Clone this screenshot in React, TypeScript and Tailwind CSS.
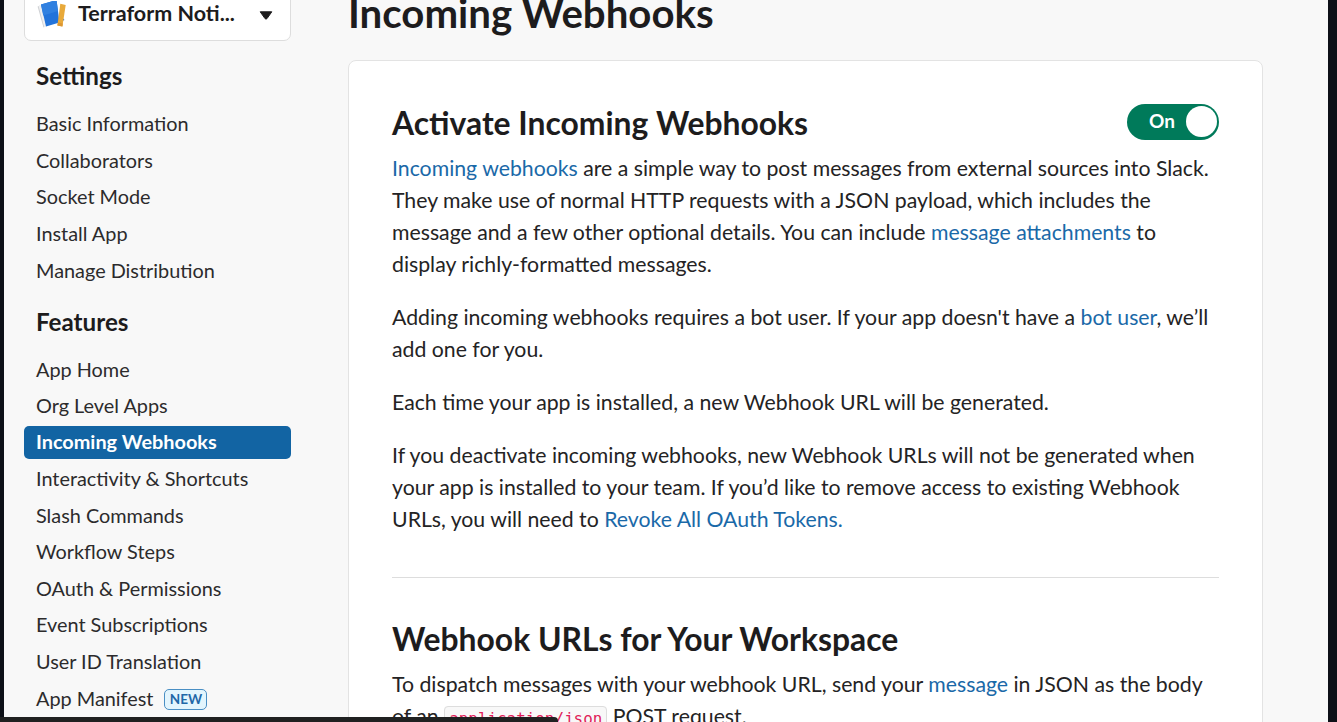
import type { ReactNode } from 'react';

const settings = ['Basic Information', 'Collaborators', 'Socket Mode', 'Install App', 'Manage Distribution'];
const features = [
  'App Home',
  'Org Level Apps',
  'Incoming Webhooks',
  'Interactivity & Shortcuts',
  'Slash Commands',
  'Workflow Steps',
  'OAuth & Permissions',
  'Event Subscriptions',
  'User ID Translation',
  'App Manifest',
];

function NavItem({ label }: { label: string }) {
  const active = label === 'Incoming Webhooks';
  return (
    <li className="flex h-[36.55px] items-center">
      <a
        className={
          active
            ? 'flex h-[33px] w-full items-center rounded-[5px] bg-[#1264a3] px-3 pb-px font-bold text-white'
            : 'flex h-[33px] w-full items-center px-3'
        }
      >
        {label}
        {label === 'App Manifest' && (
          <span className="ml-[11px] mt-[2px] flex h-[21px] w-[43px] items-center justify-center rounded-[5px] border-[1.5px] border-[#4a8fc4] bg-[#e3f5fd] text-[13.5px] font-bold text-[#1f68a8]">
            NEW
          </span>
        )}
      </a>
    </li>
  );
}

function Link({ children }: { children: ReactNode }) {
  return <a className="text-[#1a69a8]">{children}</a>;
}

function AppIcon() {
  return (
    <svg width="30" height="30" viewBox="0 0 30 30" className="mt-[5px] shrink-0">
      <path d="M0.6 5.5 3 4.5 8.5 25.5 6.5 26.5Z" fill="#cfd1d4" />
      <path d="M1.6 5 4.5 4 9.5 24.5 7.3 26.3Z" fill="#f0f0f1" />
      <path d="M24 15 27.5 19 24 20.5Z" fill="#2b6fd0" />
      <path d="M4 3.5 19.5 -1 22.5 21.5 9 25.5Z" fill="#2273da" />
      <path d="M4 3.5 19.5 -1 21 10 6.2 14.5Z" fill="#3080e0" />
      <path d="M23.3 2.8 28.7 4 25.4 25.5 20.4 24.5Z" fill="#e8a93a" />
      <path d="M20.4 24.5 20.9 21.5 25.9 22.5 25.4 25.5Z" fill="#dd9732" />
    </svg>
  );
}

export default function App() {
  return (
    <div className="relative flex h-[722px] w-[1337px] overflow-hidden bg-[#0d1017] font-['Lato',sans-serif] text-[#1d1c1d]">
      <div className="ml-1 flex w-[1324px] shrink-0 overflow-hidden bg-[#f8f8f8]">
        <aside className="ml-5 w-[267px] shrink-0 whitespace-nowrap text-[19.87px] text-[#2c2b2c]">
          <div className="-mt-[12px] flex h-[53px] items-center rounded-[7px] border border-[#dddddd] bg-white pb-[2px] pl-3 pr-[17px]">
            <AppIcon />
            <span className="ml-[11px] flex-1 text-[21.5px] font-bold text-[#1d1c1d]">Terraform Noti...</span>
            <svg width="14" height="9" viewBox="0 0 14 9" className="mt-[4px] shrink-0">
              <path d="M1.2 .8h11.6L8 7.6Q7 8.6 6 7.6Z" fill="#1d1c1d" stroke="#1d1c1d" strokeLinejoin="round" />
            </svg>
          </div>
          <h3 className="flex h-[65px] items-center pl-3 pt-[6px] text-[24.2px] font-bold text-[#1d1c1d]">Settings</h3>
          <ul>{settings.map((s) => <NavItem key={s} label={s} />)}</ul>
          <h3 className="flex h-[62.5px] items-center pl-3 pt-[4px] text-[24.2px] font-bold text-[#1d1c1d]">Features</h3>
          <ul>{features.map((s) => <NavItem key={s} label={s} />)}</ul>
        </aside>
        <main className="ml-[57px] w-[915px] shrink-0">
          <h1 className="-mt-[11px] h-[71px] whitespace-nowrap text-[40.2px] font-bold leading-[48px]">Incoming Webhooks</h1>
          <section className="h-[720px] whitespace-nowrap rounded-[8px] border border-[#e3e3e3] bg-white px-[43px] pt-[42.5px] text-[21.265px] leading-8">
            <div className="flex h-[48.5px] items-start justify-between">
              <h2 className="text-[31.85px] font-bold leading-[39px]">Activate Incoming Webhooks</h2>
              <button className="flex h-9 w-[92px] items-center justify-between rounded-full bg-[#007a5a] pl-[22px] pr-[2px] text-[19px] font-bold leading-none text-white">
                <span className="-mt-[3px]">On</span>
                <span className="h-[31px] w-[31px] rounded-full bg-white" />
              </button>
            </div>
            <div className="text-[#242324]">
              <p>
                <Link>Incoming webhooks</Link> are a simple way to post messages from external sources into Slack.
                <br />
                They make use of normal HTTP requests with a JSON payload, which includes the
                <br />
                message and a few other optional details. You can include <Link>message attachments</Link> to
                <br />
                display richly-formatted messages.
              </p>
              <p className="mt-[20.5px]">
                Adding incoming webhooks requires a bot user. If your app doesn't have a <Link>bot user</Link>, we’ll
                <br />
                add one for you.
              </p>
              <p className="mt-[21.5px]">Each time your app is installed, a new Webhook URL will be generated.</p>
              <p className="mt-[21px]">
                If you deactivate incoming webhooks, new Webhook URLs will not be generated when
                <br />
                your app is installed to your team. If you’d like to remove access to existing Webhook
                <br />
                URLs, you will need to <Link>Revoke All OAuth Tokens.</Link>
              </p>
            </div>
            <hr className="mt-[42px] border-[#dddddd]" />
            <h2 className="mt-[42px] h-[48px] text-[31.85px] font-bold leading-[39px]">Webhook URLs for Your Workspace</h2>
            <p className="text-[#242324]">
              To dispatch messages with your webhook URL, send your <Link>message</Link> in JSON as the body
              <br />
              of an{' '}
              <code className="rounded-[4px] border border-[#dddddd] bg-[#f8f8f8] px-[4px] py-[2px] font-['DejaVu_Sans_Mono',monospace] text-[15.9px] text-[#e01e5a]">
                application/json
              </code>{' '}
              POST request.
            </p>
          </section>
        </main>
      </div>
      <div className="absolute bottom-0 left-0 h-[5px] w-[558px] rounded-tr-[4px] bg-[#202121]" />
    </div>
  );
}
